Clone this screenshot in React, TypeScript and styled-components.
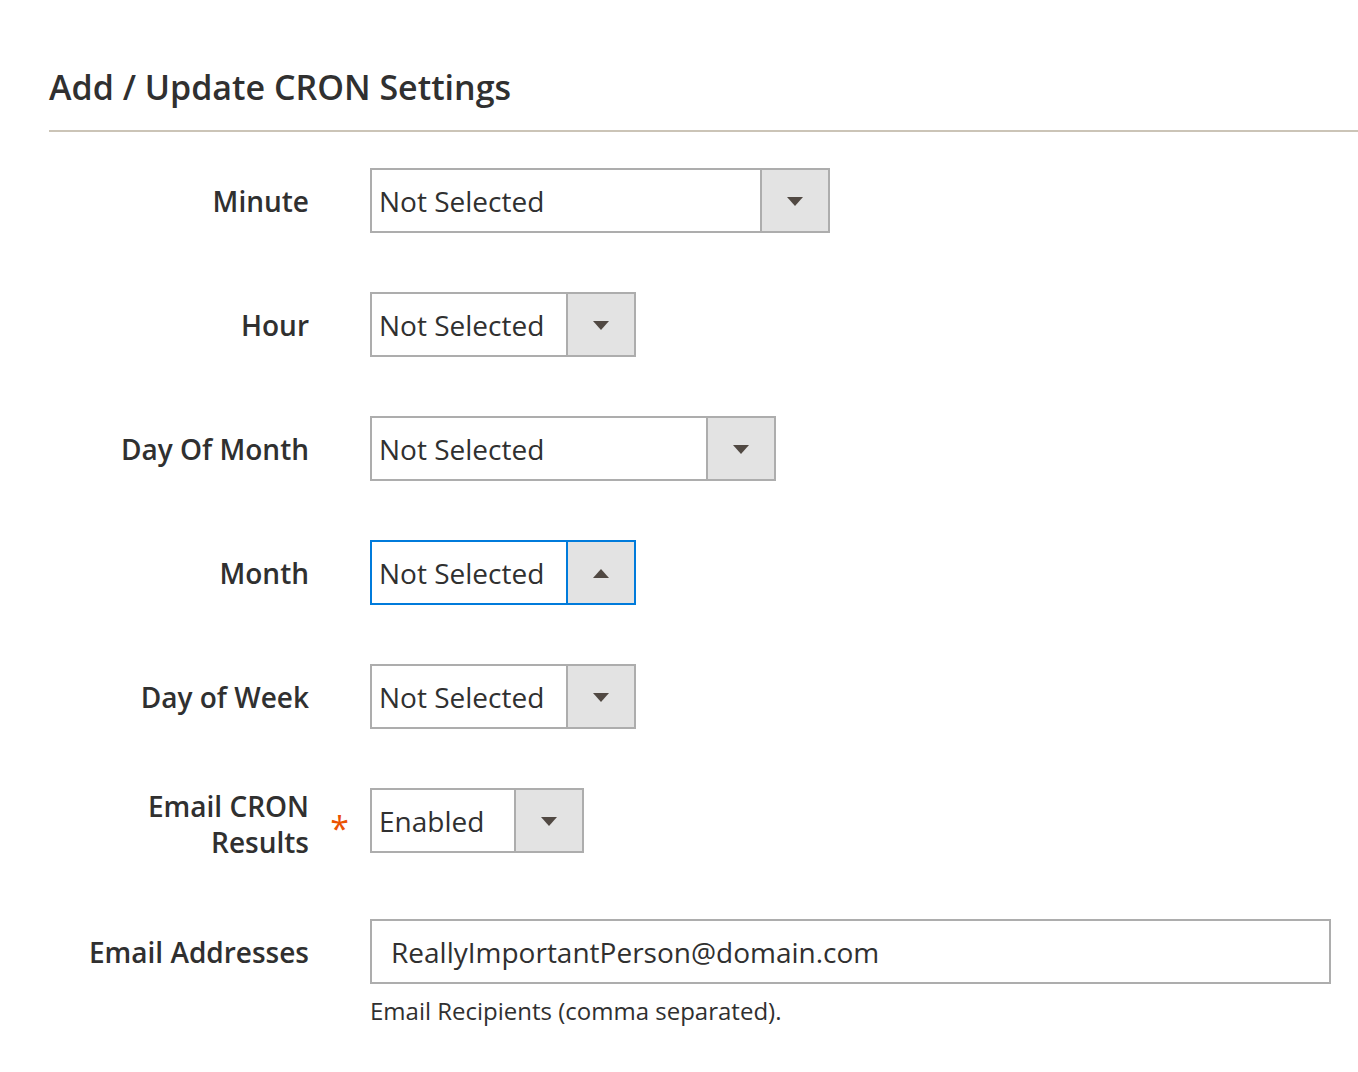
import React from "react";
import styled, { createGlobalStyle } from "styled-components";

const Global = createGlobalStyle`
  html, body { margin: 0; padding: 0; background: #ffffff; }
  body { font-family: "Open Sans", "Noto Sans", sans-serif; color: #303030; }
`;

const Page = styled.div`
  padding: 0 0 40px 49px;
`;

const Header = styled.div`
  border-bottom: 2px solid #cbc4b7;
  padding: 64px 0 20px;
`;

const Title = styled.h1`
  margin: 0;
  font-size: 34px;
  line-height: 46px;
  font-weight: 600;
  color: #303030;
`;

const Form = styled.div`
  display: flex;
  flex-direction: column;
  gap: 59px;
  padding-top: 36px;
`;

const Row = styled.div`
  display: flex;
  align-items: flex-start;
`;

const Label = styled.div`
  width: 260px;
  min-height: 65px;
  display: flex;
  align-items: center;
  justify-content: flex-end;
  text-align: right;
  font-size: 28px;
  line-height: 36px;
  font-weight: 600;
  color: #303030;
`;

const Marker = styled.div`
  width: 61px;
  min-height: 65px;
  display: flex;
  align-items: center;
  justify-content: center;
  padding-top: 15px;
  box-sizing: border-box;
  font-size: 34px;
  line-height: 30px;
  color: #eb5202;
  font-weight: 400;
`;

const Field = styled.div`
  display: flex;
  flex-direction: column;
  flex: 1;
  min-width: 0;
`;

const SelectBox = styled.div<{ $w: number; $focus?: boolean }>`
  width: ${(p) => p.$w}px;
  height: 65px;
  box-sizing: border-box;
  display: flex;
  border: 2px solid ${(p) => (p.$focus ? "#007bdb" : "#adadad")};
  background: #ffffff;
`;

const SelectText = styled.div`
  flex: 1;
  display: flex;
  align-items: center;
  padding-left: 7px;
  font-size: 28px;
  color: #303030;
  white-space: nowrap;
`;

const ArrowBox = styled.div<{ $focus?: boolean }>`
  width: 68px;
  box-sizing: border-box;
  border-left: 2px solid ${(p) => (p.$focus ? "#007bdb" : "#adadad")};
  background: #e3e3e3;
  display: flex;
  align-items: center;
  justify-content: center;
  padding-top: 2px;
`;

const TextInput = styled.div`
  width: 961px;
  height: 65px;
  box-sizing: border-box;
  border: 2px solid #adadad;
  display: flex;
  align-items: center;
  padding-left: 19px;
  font-size: 28px;
  color: #303030;
`;

const Note = styled.div`
  margin-top: 11px;
  font-size: 24px;
  line-height: 32px;
  color: #303030;
`;

const Arrow = ({ up }: { up?: boolean }) => (
  <svg width="16" height="9" viewBox="0 0 16 9">
    <path d={up ? "M0 9 L8 0 L16 9 Z" : "M0 0 L16 0 L8 9 Z"} fill="#514943" />
  </svg>
);

const Select = ({ w, value, focus }: { w: number; value: string; focus?: boolean }) => (
  <SelectBox $w={w} $focus={focus}>
    <SelectText>{value}</SelectText>
    <ArrowBox $focus={focus}>
      <Arrow up={focus} />
    </ArrowBox>
  </SelectBox>
);

const rows = [
  { label: "Minute", w: 460 },
  { label: "Hour", w: 266 },
  { label: "Day Of Month", w: 406 },
  { label: "Month", w: 266, focus: true },
  { label: "Day of Week", w: 266 },
];

export default function App() {
  return (
    <Page>
      <Global />
      <Header>
        <Title>Add / Update CRON Settings</Title>
      </Header>
      <Form>
        {rows.map((r) => (
          <Row key={r.label}>
            <Label>{r.label}</Label>
            <Marker />
            <Field>
              <Select w={r.w} value="Not Selected" focus={r.focus} />
            </Field>
          </Row>
        ))}
        <Row>
          <Label>
            Email CRON
            <br />
            Results
          </Label>
          <Marker>*</Marker>
          <Field>
            <Select w={214} value="Enabled" />
          </Field>
        </Row>
        <Row>
          <Label>Email Addresses</Label>
          <Marker />
          <Field>
            <TextInput>ReallyImportantPerson@domain.com</TextInput>
            <Note>Email Recipients (comma separated).</Note>
          </Field>
        </Row>
      </Form>
    </Page>
  );
}
